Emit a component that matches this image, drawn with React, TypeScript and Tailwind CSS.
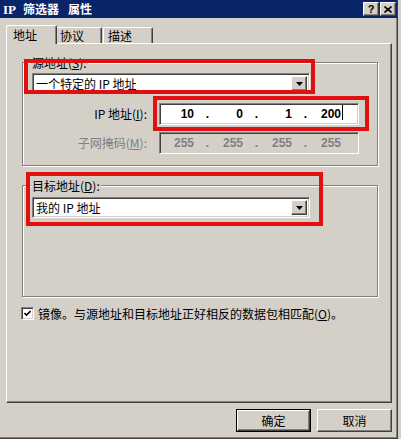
import React from "react";

const raised =
  "border border-t-white border-l-white border-r-[#404040] border-b-[#404040] shadow-[inset_-1px_-1px_0_#808080]";
const sunken =
  "border border-t-[#808080] border-l-[#808080] border-r-white border-b-white shadow-[inset_1px_1px_0_#404040,inset_-1px_-1px_0_#d4d0c8]";
const groupBox =
  "border border-[#808080] shadow-[inset_1px_1px_0_white,1px_1px_0_white]";

function Arrow() {
  return (
    <svg width="7" height="4" viewBox="0 0 7 4">
      <polygon points="0,0 7,0 3.5,4" fill="black" />
    </svg>
  );
}

function Combo({ text }: { text: string }) {
  return (
    <div className={`${sunken} bg-white h-[21px] w-[278px] flex items-center p-[2px]`}>
      <span className="flex-1 pl-[1px] leading-none whitespace-nowrap">{text}</span>
      <div className={`${raised} bg-[#d4d0c8] w-[16px] h-full flex items-center justify-center`}>
        <Arrow />
      </div>
    </div>
  );
}

function IpField({
  values,
  disabled,
  caret,
}: {
  values: string[];
  disabled?: boolean;
  caret?: boolean;
}) {
  return (
    <div
      className={`${sunken} ${disabled ? "bg-[#d4d0c8] text-[#808080]" : "bg-white text-black"} w-[200px] h-[22px] grid grid-cols-4 items-center px-[1px] font-['Liberation_Sans',sans-serif] font-bold text-[12px] leading-none`}
    >
      {values.map((v, i) => (
        <div key={i} className="flex justify-end items-center">
          <span className="relative">
            {v}
            {caret && i === 3 ? (
              <span className="absolute right-[-2px] top-[-3px] w-[1px] h-[15px] bg-black" />
            ) : null}
          </span>
          <span className="w-[16px] text-right pr-[1px]">{i < 3 ? "." : ""}</span>
        </div>
      ))}
    </div>
  );
}

function TitleBtn({ children }: { children: React.ReactNode }) {
  return (
    <div
      className={`${raised} bg-[#d4d0c8] w-[16px] h-[14px] flex items-center justify-center text-black font-bold text-[11px] leading-none font-['Liberation_Sans',sans-serif]`}
    >
      {children}
    </div>
  );
}

function Btn({ label, def }: { label: string; def?: boolean }) {
  return (
    <div className={`${def ? "border border-black" : ""} w-[75px] h-[23px] flex`}>
      <div className={`${raised} bg-[#d4d0c8] flex-1 flex items-center justify-center leading-none`}>
        {label}
      </div>
    </div>
  );
}

export default function App() {
  return (
    <div className="w-[401px] h-[439px] bg-[#d4d0c8] font-['Noto_Sans_CJK_SC',sans-serif] text-[12px] text-black overflow-hidden">
      <div className="relative w-[398px] h-[439px] flex flex-col border-r border-b border-r-[#404040] border-b-[#404040] shadow-[inset_-1px_-1px_0_#808080]">
        {/* Title bar */}
        <div className="h-[18px] bg-[#0a246a] flex items-center pl-[3px] pr-[1px]">
          <span className="text-white font-bold text-[12px] leading-none flex">
            <span className="font-['Liberation_Serif',serif] text-[13px]">IP</span>
            <span className="ml-[7px]">筛选器</span>
            <span className="ml-[9px]">属性</span>
          </span>
          <div className="ml-auto flex gap-[1px]">
            <TitleBtn>?</TitleBtn>
            <TitleBtn>
              <svg width="8" height="7" viewBox="0 0 8 7">
                <path d="M0.5 0.5 L7.5 6.5 M7.5 0.5 L0.5 6.5" stroke="black" strokeWidth="1.6" />
              </svg>
            </TitleBtn>
          </div>
        </div>

        {/* Tabs */}
        <div className="mt-[7px] pl-[6px] flex items-end h-[18px]">
          <div className="relative z-10 -mb-[1px] h-[19px] w-[51px] bg-[#d4d0c8] border-l border-t border-r border-l-white border-t-white border-r-[#404040] rounded-tl-[2px] rounded-tr-[2px] shadow-[inset_-1px_0_0_#808080] pl-[6px] pt-[2px] text-[12px] leading-[14px]">
            地址
          </div>
          <div className="h-[16px] w-[45px] border-t border-r border-t-white border-r-[#404040] rounded-tr-[2px] shadow-[inset_-1px_0_0_#808080] pl-[3px] pt-[1px] leading-[14px]">
            协议
          </div>
          <div className="h-[16px] w-[50px] ml-[1px] border-l border-t border-r border-l-white border-t-white border-r-[#404040] rounded-tl-[2px] rounded-tr-[2px] shadow-[inset_-1px_0_0_#808080] pl-[4px] pt-[1px] leading-[14px]">
            描述
          </div>
        </div>

        {/* Panel */}
        <div className="ml-[6px] w-[386px] h-[360px] border border-l-white border-t-white border-r-[#404040] border-b-[#404040] shadow-[inset_-1px_-1px_0_#808080] flex flex-col">
          {/* Source group */}
          <div className={`${groupBox} ml-[15px] mt-[18px] w-[356px] h-[104px] flex flex-col`}>
            <div className="-mt-[7px] ml-[8px] w-fit px-[1px] bg-[#d4d0c8] leading-[14px]">
              源地址(<span className="underline">S</span>):
            </div>
            <div className="mt-[3px] ml-[9px]">
              <Combo text="一个特定的 IP 地址" />
            </div>
            <div className="mt-[9px] flex items-center">
              <span className="w-[124px] text-right leading-none">
                IP 地址(<span className="underline">I</span>):
              </span>
              <div className="ml-[12px]">
                <IpField values={["10", "0", "1", "200"]} caret />
              </div>
            </div>
            <div className="mt-[7px] flex items-center">
              <span className="w-[124px] text-right leading-none text-[#808080]">
                子网掩码(<span className="underline">M</span>):
              </span>
              <div className="ml-[12px]">
                <IpField values={["255", "255", "255", "255"]} disabled />
              </div>
            </div>
          </div>

          {/* Destination group */}
          <div className={`${groupBox} ml-[15px] mt-[19px] w-[356px] h-[112px] flex flex-col`}>
            <div className="-mt-[7px] ml-[8px] w-fit px-[1px] bg-[#d4d0c8] leading-[14px]">
              目标地址(<span className="underline">D</span>):
            </div>
            <div className="mt-[4px] ml-[9px]">
              <Combo text="我的 IP 地址" />
            </div>
          </div>

          {/* Mirror checkbox */}
          <div className="mt-[10px] ml-[14px] flex items-center">
            <div className={`${sunken} bg-white w-[13px] h-[13px] flex items-center justify-center`}>
              <svg width="7" height="7" viewBox="0 0 7 7">
                <path d="M0.5 3 L2.5 5 L6.5 1" stroke="black" strokeWidth="1.6" fill="none" />
              </svg>
            </div>
            <span className="ml-[4px] leading-none whitespace-nowrap">
              镜像。与源地址和目标地址正好相反的数据包相匹配(<span className="underline">O</span>)。
            </span>
          </div>
        </div>

        {/* Buttons */}
        <div className="mt-[6px] flex justify-end gap-[6px] pr-[5px]">
          <Btn label="确定" def />
          <Btn label="取消" />
        </div>

        {/* Red annotation boxes */}
        <div className="absolute left-[24px] top-[59px] w-[291px] h-[35px] border-[4px] border-[#e01010]" />
        <div className="absolute left-[153px] top-[96px] w-[216px] h-[35px] border-[4px] border-[#e01010]" />
        <div className="absolute left-[26px] top-[172px] w-[297px] h-[54px] border-[4px] border-[#e01010]" />
      </div>
    </div>
  );
}
